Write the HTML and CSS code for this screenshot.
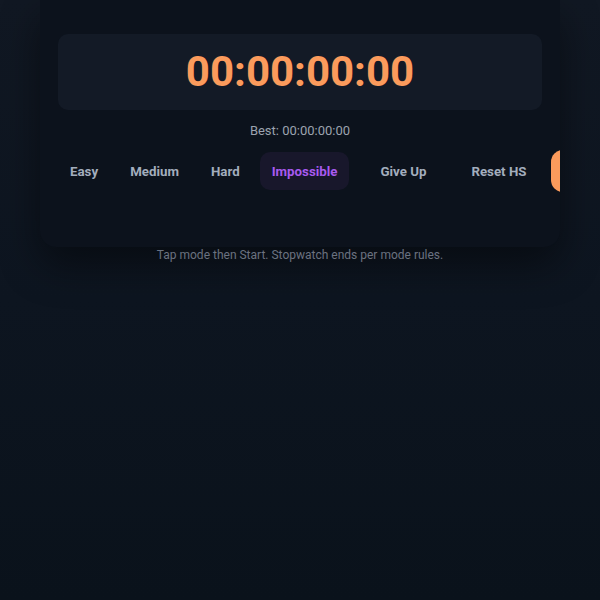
FILE: index.html
```html
<!DOCTYPE html>
<html>
<head>
<meta charset="utf-8">
<link rel="stylesheet" href="styles.css">
</head>
<body>
<div class="page">
  <div class="card">
    <div class="timer-box">
      <div class="timer">00:00:00:00</div>
    </div>
    <div class="best">Best: 00:00:00:00</div>
    <div class="row">
      <button class="btn mode">Easy</button>
      <button class="btn mode">Medium</button>
      <button class="btn mode">Hard</button>
      <button class="btn mode active">Impossible</button>
      <button class="btn action giveup">Give Up</button>
      <button class="btn action reset">Reset HS</button>
      <button class="btn start">Start</button>
    </div>
    <div class="spacer"></div>
  </div>
  <p class="hint">Tap mode then Start. Stopwatch ends per mode rules.</p>
</div>
</body>
</html>
```
FILE: styles.css
```css
html, body {
  margin: 0;
  height: 100%;
}
body {
  background: linear-gradient(180deg, #111823 0%, #0d1520 50%, #0a121b 100%);
  font-family: Roboto, "Liberation Sans", sans-serif;
}
.page {
  padding: 0 40px;
}
.card {
  background: #0c121c;
  border-radius: 0 0 16px 16px;
  padding: 34px 18px 0;
  overflow: hidden;
  box-shadow: 0 18px 40px rgba(0, 0, 0, 0.45);
}
.timer-box {
  background: #131a26;
  border-radius: 10px;
  height: 76px;
  display: flex;
  align-items: center;
  justify-content: center;
}
.timer {
  color: #fb9b5c;
  font-weight: 700;
  font-size: 42px;
  line-height: 1;
}
.best {
  text-align: center;
  color: #9ca3af;
  font-size: 13px;
  line-height: 16px;
  margin-top: 13px;
}
.row {
  display: flex;
  gap: 8px;
  margin-top: 13px;
  white-space: nowrap;
}
.btn {
  flex: none;
  height: 38px;
  border: 0;
  border-radius: 10px;
  background: transparent;
  color: #a3adbd;
  font-family: Roboto, "Liberation Sans", sans-serif;
  font-weight: 700;
  font-size: 13.3px;
  padding: 0 12px;
}
.btn.active {
  background: #18172b;
  color: #a85af0;
}
.btn.giveup {
  padding: 0 16px;
  margin-left: 7px;
}
.btn.reset {
  padding: 0 16px;
  margin-left: 5px;
}
.btn.start {
  background: #fb9b5c;
  color: #0c121c;
  border-radius: 12px;
  height: 42px;
  margin-top: -2px;
  padding: 0 20px;
}
.spacer {
  height: 55px;
}
.hint {
  margin: 1px 0 0;
  text-align: center;
  color: #6b7280;
  font-size: 12px;
  line-height: 14px;
}
```
